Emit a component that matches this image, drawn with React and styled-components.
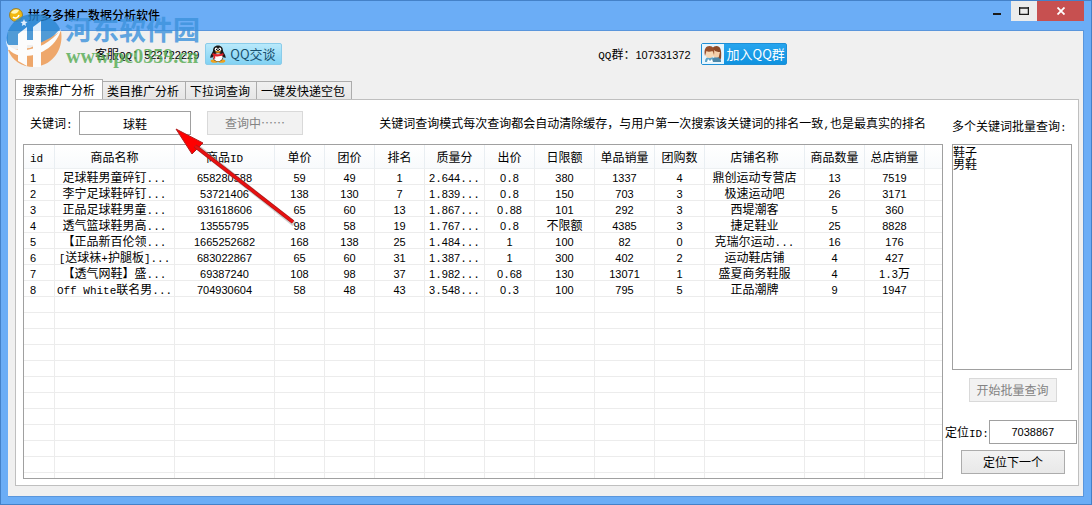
import React from "react";
import styled, { createGlobalStyle } from "styled-components";

const GlobalStyle = createGlobalStyle`
  * {
    box-sizing: border-box;
  }
  body {
    margin: 0;
    color: #000;
    font: 12px/16px "Noto Sans CJK SC", "Liberation Sans", sans-serif;
  }
  button, input, textarea {
    font: inherit;
    color: inherit;
    border-radius: 0;
  }
`;

const Window = styled.div`
  position: relative;
  display: flex;
  flex-direction: column;
  height: 100vh;
  padding: 0 7px 7px;
  background: #6badf6;
  border: 1px solid #4481c8;
`;

const TitleBar = styled.header`
  display: flex;
  flex: none;
  height: 29px;
`;

const Title = styled.h1`
  flex: 1;
  margin: 0;
  padding: 5px 0 0 5px;
  font-size: 12px;
  line-height: 18px;
  font-weight: 500;
`;

const AppIcon = styled.svg`
  width: 14px;
  height: 14px;
  margin: 7px 0 0 1px;
`;

const WindowButton = styled.button`
  display: flex;
  align-items: center;
  justify-content: center;
  width: ${(p) => p.$width};
  height: 20px;
  padding: 0;
  border: 0;
  background: ${(p) => p.$color || "transparent"};
`;

const Client = styled.main`
  display: flex;
  flex: 1;
  flex-direction: column;
  min-height: 0;
  padding: 0 4px 10px 7px;
  background: #f0f0f0;
  border: 1px solid #5a96dc;
  border-left: 0;
`;

const Contacts = styled.div`
  display: grid;
  grid-template-columns: 504fr 485fr;
  align-items: center;
  flex: none;
  height: 46px;
`;

const Contact = styled.div`
  display: flex;
  align-items: center;
  padding-left: ${(p) => p.$indent};
  gap: ${(p) => p.$gap};
`;

const QQButton = styled.button`
  display: flex;
  align-items: center;
  gap: 3px;
  height: 22px;
  padding: 0 5px 0 3px;
  border: 1px solid #8accea;
  border-radius: 2px;
  background: linear-gradient(#b9e9fb, #82d2f3);
  color: #17516f;
  font-size: 13px;
  white-space: nowrap;
`;

const JoinButton = styled(QQButton)`
  padding: 0 1px 0 0;
  border-color: #1e8fd6;
  background: linear-gradient(#27a5ee, #1093e0);
  color: #fff;
`;

const Avatars = styled.svg`
  width: 22px;
  height: 20px;
  background: #e6f5fd;
`;

const Tabs = styled.div`
  display: flex;
  align-items: flex-end;
  flex: none;
  height: 22px;
`;

const Tab = styled.button`
  height: ${(p) => (p.$active ? "21px" : "18px")};
  margin-bottom: ${(p) => (p.$active ? "-1px" : "0")};
  padding: ${(p) => (p.$active ? "0 7px" : "0 6px 0 4px")};
  border: 1px solid #acacac;
  border-bottom: 0;
  border-left-width: ${(p) => (p.$active ? "1px" : "0")};
  background: ${(p) => (p.$active ? "#fff" : "linear-gradient(#f0f0f0, #e6e6e6)")};
  line-height: 16px;
  white-space: nowrap;
`;

const Panel = styled.section`
  display: grid;
  grid-template-columns: minmax(0, 1fr) 135px;
  flex: 1;
  min-height: 0;
  background: #fff;
  border: 1px solid #bfbfbf;
`;

const Main = styled.div`
  display: flex;
  flex-direction: column;
  min-height: 0;
  padding: 11px 0 6px 7px;
`;

const SearchRow = styled.form`
  display: flex;
  align-items: center;
  flex: none;
  height: 24px;
  margin-bottom: 9px;
  padding-left: 7px;
`;

const SearchLabel = styled.label`
  width: 49px;
  white-space: nowrap;
`;

const Note = styled.p`
  margin: 0 17px 0 auto;
  white-space: nowrap;
`;

const TextBox = styled.input`
  width: ${(p) => p.$width};
  height: 24px;
  padding: 0;
  border: 1px solid #a0a0a0;
  background: #fff;
  text-align: center;
`;

const NumberBox = styled(TextBox)`
  font-family: "Liberation Sans", sans-serif;
  font-size: 11px;
`;

const PushButton = styled.button`
  width: ${(p) => p.$width};
  height: 24px;
  padding: 0;
  border: 1px solid #acacac;
  background: linear-gradient(#f2f2f2, #e8e8e8);

  &:disabled {
    border-color: #d9d9d9;
    background: #f2f2f2;
    color: #838383;
  }
`;

const TableFrame = styled.div`
  flex: 1;
  min-height: 0;
  overflow: hidden;
  border: 1px solid #a0a0a0;
`;

const Table = styled.table`
  width: 100%;
  table-layout: fixed;
  border-collapse: separate;
  border-spacing: 0;
`;

const Th = styled.th`
  height: 24px;
  padding: 0;
  border-right: 1px solid #e9eef2;
  border-bottom: 1px solid #edf0f2;
  background: linear-gradient(#fff, #f8fafc);
  font-weight: 400;
  text-align: center;
  white-space: nowrap;

  &:first-child {
    padding-left: 6px;
    text-align: left;
  }
  &:last-child {
    border-right: 0;
  }
`;

const Td = styled.td`
  height: 16px;
  padding: 0;
  border-right: 1px solid #ececec;
  border-bottom: 1px solid #ececec;
  line-height: 15px;
  text-align: center;
  white-space: nowrap;

  &:first-child {
    padding-left: 6px;
    text-align: left;
  }
  &:last-child {
    border-right: 0;
  }
`;

const Digits = styled.span`
  font-family: "Liberation Sans", sans-serif;
  font-size: 11px;
  line-height: 0;
`;

const Mono = styled.span`
  font-family: "Liberation Mono", monospace;
  font-size: 11px;
  line-height: 0;
`;

const Side = styled.aside`
  display: flex;
  flex-direction: column;
  padding: 18px 3px 11px 2px;
`;

const BatchLabel = styled.label`
  margin: 0 0 10px 7px;
  white-space: nowrap;
`;

const BatchBox = styled.textarea`
  display: block;
  flex: 1;
  width: 120px;
  min-height: 0;
  margin-left: 7px;
  padding: 1px 0;
  border: 1px solid #a0a0a0;
  background: #fff;
  line-height: 12px;
  resize: none;
`;

const Centered = styled.div`
  display: flex;
  justify-content: center;
  padding: ${(p) => p.$pad};
`;

const LocateRow = styled.div`
  display: flex;
  align-items: center;
  justify-content: space-between;
  white-space: nowrap;
`;

const Watermark = styled.div`
  position: absolute;
  top: 10px;
  left: 4px;
  display: flex;
  opacity: 0.8;
  pointer-events: none;
`;

const WatermarkLogo = styled.svg`
  width: 58px;
  height: 58px;
`;

const WatermarkName = styled.div`
  margin-left: 2px;
  color: #3c92dc;
  font-weight: 700;
  font-size: 27px;
  line-height: 36px;
`;

const WatermarkUrl = styled.div`
  margin-left: 3px;
  color: #54ab52;
  font: 700 20px/18px "Liberation Serif", serif;
`;

const Arrow = styled.svg`
  position: absolute;
  top: 124px;
  left: 170px;
  width: 130px;
  height: 106px;
  pointer-events: none;
`;

const columns = [
  ["id", 31],
  ["商品名称", 120],
  ["商品ID", 100],
  ["单价", 50],
  ["团价", 50],
  ["排名", 50],
  ["质量分", 60],
  ["出价", 50],
  ["日限额", 60],
  ["单品销量", 60],
  ["团购数", 50],
  ["店铺名称", 100],
  ["商品数量", 60],
  ["总店销量", 60],
  ["", null],
];

const products = [
  ["1", "足球鞋男童碎钉...", "658280588", "59", "49", "1", "2.644...", "0.8", "380", "1337", "4", "鼎创运动专营店", "13", "7519", ""],
  ["2", "李宁足球鞋碎钉...", "53721406", "138", "130", "7", "1.839...", "0.8", "150", "703", "3", "极速运动吧", "26", "3171", ""],
  ["3", "正品足球鞋男童...", "931618606", "65", "60", "13", "1.867...", "0.88", "101", "292", "3", "西堤潮客", "5", "360", ""],
  ["4", "透气篮球鞋男高...", "13555795", "98", "58", "19", "1.767...", "0.8", "不限额", "4385", "3", "捷足鞋业", "25", "8828", ""],
  ["5", "【正品新百伦领...", "1665252682", "168", "138", "25", "1.484...", "1", "100", "82", "0", "克瑞尔运动...", "16", "176", ""],
  ["6", "[送球袜+护腿板]...", "683022867", "65", "60", "31", "1.387...", "1", "300", "402", "2", "运动鞋店铺", "4", "427", ""],
  ["7", "【透气网鞋】盛...", "69387240", "108", "98", "37", "1.982...", "0.68", "130", "13071", "1", "盛夏商务鞋服", "4", "1.3万", ""],
  ["8", "Off White联名男...", "704930604", "58", "48", "43", "3.548...", "0.3", "100", "795", "5", "正品潮牌", "9", "1947", ""],
];

const EMPTY_ROWS = 12;

// digits, latin and chinese each get their own font so that
// two half-width characters are about as wide as one full-width one
const Mixed = ({ children }) =>
  children.split(/([0-9]+|[\x20-\x2f\x3a-\x7e]+)/).map((part, i) => {
    if (!part) return null;
    if (/^[0-9]/.test(part)) return <Digits key={i}>{part}</Digits>;
    if (/^[\x20-\x7e]/.test(part)) return <Mono key={i}>{part}</Mono>;
    return part;
  });

const ProductTable = () => (
  <TableFrame>
    <Table>
      <colgroup>
        {columns.map(([name, width], i) => (
          <col key={i} width={width} />
        ))}
      </colgroup>
      <thead>
        <tr>
          {columns.map(([name], i) => (
            <Th key={i}>
              <Mixed>{name}</Mixed>
            </Th>
          ))}
        </tr>
      </thead>
      <tbody>
        {products.map((row) => (
          <tr key={row[0]}>
            {row.map((cell, i) => (
              <Td key={i}>
                <Mixed>{cell}</Mixed>
              </Td>
            ))}
          </tr>
        ))}
        {Array.from({ length: EMPTY_ROWS }, (_, r) => (
          <tr key={r}>
            {columns.map((c, i) => (
              <Td key={i} />
            ))}
          </tr>
        ))}
      </tbody>
    </Table>
  </TableFrame>
);

const Penguin = () => (
  <svg width="18" height="18" viewBox="0 0 18 18">
    <ellipse cx="5.5" cy="16" rx="3.8" ry="1.8" fill="#f0a11c" />
    <ellipse cx="12.5" cy="16" rx="3.8" ry="1.8" fill="#f0a11c" />
    <path d="M9 .5c-3.4 0-5 2.300-5 5.200C4 7 1.200 10 1.400 12.400c.1 1.200 1.200.4 2-.6C4 15 6 16.500 9 16.500s5-1.500 5.600-4.700c.8 1 1.900 1.800 2 .6C16.800 10 14 7 14 5.700 14 2.800 12.400.5 9 .5z" fill="#1a1a1a" />
    <ellipse cx="9" cy="12.200" rx="4.600" ry="4" fill="#fff" />
    <ellipse cx="7.200" cy="4.200" rx="1.400" ry="1.700" fill="#fff" />
    <ellipse cx="10.800" cy="4.200" rx="1.400" ry="1.700" fill="#fff" />
    <circle cx="7.500" cy="4.400" r="0.600" />
    <circle cx="10.500" cy="4.400" r="0.600" />
    <ellipse cx="9" cy="6.800" rx="2.800" ry="0.900" fill="#f5a623" />
    <path d="M3.800 8c3.200 1.600 7.200 1.600 10.400 0l.4 2c-3 1.400-6 1.600-8.400 1.200v2.600H4.600v-3.200l-1.200-.6z" fill="#e0232b" />
  </svg>
);

const People = () => (
  <Avatars viewBox="0 0 22 20">
    <path d="M3 18c0-4 2-5 5-5s5 1 5 5z" fill="#5fa4c8" />
    <path d="M10 18c0-4 2-5 5-5s4 1 4 5z" fill="#4d87a8" />
    <circle cx="14.500" cy="9.500" r="4" fill="#f5cfaa" />
    <path d="M10 10c-1-5 1-8 4.500-8S20 5 19 15l-2.500-1 1.500-6c-2 0-5-.500-6-2z" fill="#8c4a28" />
    <circle cx="7.500" cy="10" r="4" fill="#f8d8b4" />
    <path d="M3 12C1.500 5 4 2 7.500 2s5.500 3 4.500 9l-1.200-4C8 8 5.500 8 4.500 7z" fill="#984f2b" />
    <path d="M6 15l2 2 2-2 1 3H5z" fill="#fff" />
  </Avatars>
);

const Brand = () => (
  <Watermark>
    <WatermarkLogo viewBox="0 0 58 58">
      <path d="M2 34C-1 17 12 3 29 3c13 0 22 6 26 15L40 34H12z" fill="#2a86d0" />
      <path d="M56 20c3 18-8 35-27 36C16 56 7 49 3 39l22-2 20-10z" fill="#ee964a" />
      <path d="M1 27c0 8 7 12 16 12C32 39 47 31 56 18c-3 15-19 27-36 27C8 45 0 38 1 27z" fill="#fff" />
      <path d="M13 23l9-7v39l-9-5z" fill="#fff" />
      <path d="M28 16l8-6v46h-8z" fill="#fff" />
      <path d="M22 29h6v5h-6z" fill="#fff" />
      <path d="M19 8l1 2.500 2.500.5-2 1.500.5 2.500-2-1.200-2.200 1.200.6-2.500-2-1.500 2.600-.5z" fill="#fff" />
    </WatermarkLogo>
    <div>
      <WatermarkName>河东软件园</WatermarkName>
      <WatermarkUrl>www.pc0359.cn</WatermarkUrl>
    </div>
  </Watermark>
);

const App = () => (
  <>
    <GlobalStyle />
    <Window lang="zh-CN">
      <TitleBar>
        <AppIcon viewBox="0 0 14 14">
          <circle cx="7" cy="7" r="6.500" fill="#f2b90f" stroke="#96803a" />
          <path d="M2 5c1-3 5-4.500 8-3-1 3-4 5-8 3z" fill="#fff6b8" />
          <path d="M4 9c2 2 5 1 6-2" fill="none" stroke="#fff" strokeWidth="1.500" />
        </AppIcon>
        <Title>拼多多推广数据分析软件</Title>
        <WindowButton $width="28px" aria-label="最小化">
          <svg width="10" height="10">
            <path d="M1 7h8v2H1z" fill="#1b1b1b" />
          </svg>
        </WindowButton>
        <WindowButton $width="26px" $color="#ececec" aria-label="最大化">
          <svg width="10" height="8">
            <path d="M.5 0v7.500h9V0M0 1h10" fill="none" stroke="#1b1b1b" strokeWidth="1.500" />
          </svg>
        </WindowButton>
        <WindowButton $width="47px" $color="#c75050" aria-label="关闭">
          <svg width="8" height="8">
            <path d="M.5.5l7 7M7.500.5l-7 7" stroke="#fff" strokeWidth="1.800" />
          </svg>
        </WindowButton>
      </TitleBar>
      <Client>
        <Contacts>
          <Contact $indent="80px" $gap="6px">
            <span>
              <Mixed>客服QQ：522722229</Mixed>
            </span>
            <QQButton>
              <Penguin />
              QQ交谈
            </QQButton>
          </Contact>
          <Contact $indent="41px" $gap="10px">
            <span>
              <Mixed>QQ群：107331372</Mixed>
            </span>
            <JoinButton>
              <People />
              加入QQ群
            </JoinButton>
          </Contact>
        </Contacts>
        <Tabs role="tablist">
          <Tab role="tab" aria-selected="true" $active>
            搜索推广分析
          </Tab>
          <Tab role="tab">类目推广分析</Tab>
          <Tab role="tab">下拉词查询</Tab>
          <Tab role="tab">一键发快递空包</Tab>
        </Tabs>
        <Panel>
          <Main>
            <SearchRow onSubmit={(e) => e.preventDefault()}>
              <SearchLabel htmlFor="keyword">
                <Mixed>关键词:</Mixed>
              </SearchLabel>
              <TextBox id="keyword" $width="112px" defaultValue="球鞋" />
              <Centered $pad="0 16px">
                <PushButton $width="96px" disabled>
                  查询中……
                </PushButton>
              </Centered>
              <Note>
                <Mixed>
                  关键词查询模式每次查询都会自动清除缓存，与用户第一次搜索该关键词的排名一致,也是最真实的排名
                </Mixed>
              </Note>
            </SearchRow>
            <ProductTable />
          </Main>
          <Side>
            <BatchLabel htmlFor="batch">
              <Mixed>多个关键词批量查询:</Mixed>
            </BatchLabel>
            <BatchBox id="batch" defaultValue={"鞋子\n男鞋"} />
            <Centered $pad="8px 0 18px 5px">
              <PushButton $width="88px" disabled>
                开始批量查询
              </PushButton>
            </Centered>
            <LocateRow>
              <label htmlFor="locate">
                <Mixed>定位ID:</Mixed>
              </label>
              <NumberBox id="locate" $width="88px" defaultValue="7038867" />
            </LocateRow>
            <Centered $pad="6px 0 0 6px">
              <PushButton $width="104px">定位下一个</PushButton>
            </Centered>
          </Side>
        </Panel>
      </Client>
      <Brand />
      <Arrow viewBox="0 0 130 106">
        <path d="M123 99L24 20" stroke="#8d8d8d" strokeWidth="5" opacity="0.4" />
        <path d="M5 4l27 14-11 11z" fill="#f00" stroke="#b02020" strokeWidth="1" />
        <path d="M122 97L24 21" stroke="#b01818" strokeWidth="4" />
        <path d="M122 97L24 21" stroke="#e81010" strokeWidth="2.500" />
      </Arrow>
    </Window>
  </>
);

export default App;
